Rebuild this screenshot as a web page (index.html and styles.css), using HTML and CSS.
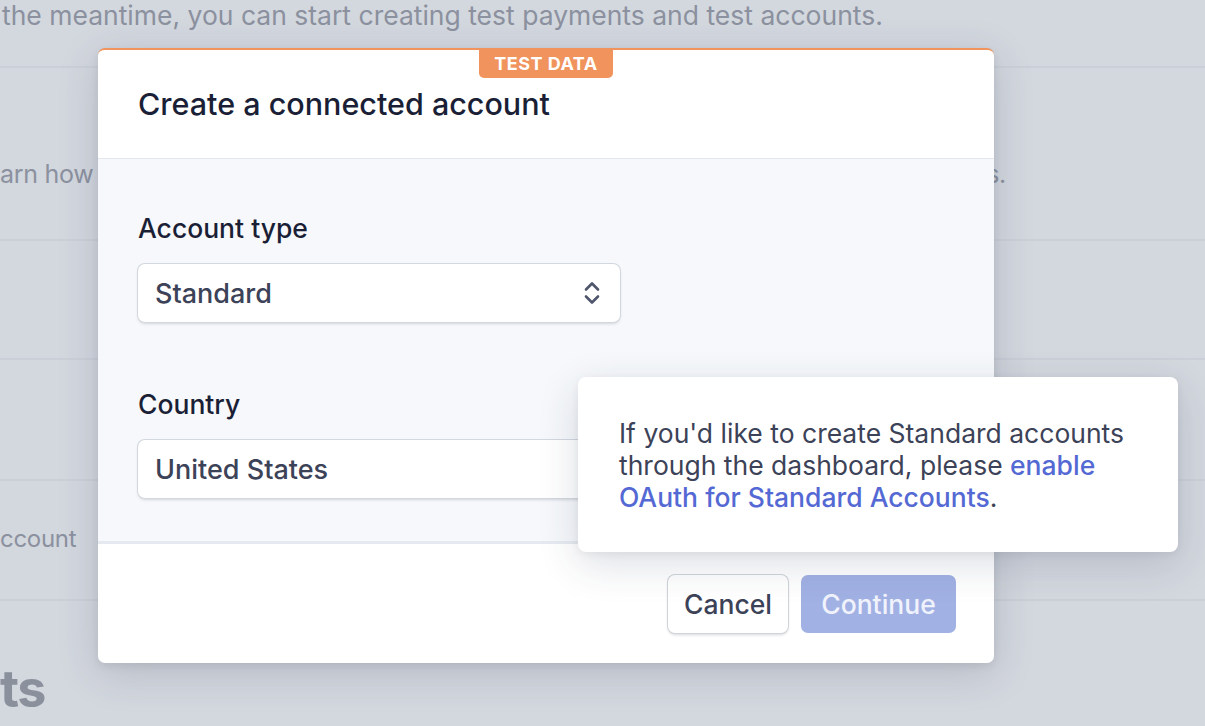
FILE: index.html
```html
<!DOCTYPE html>
<html lang="en">
<head>
<meta charset="utf-8">
<title>Create a connected account</title>
<link rel="stylesheet" href="styles.css">
</head>
<body>
<div class="page">
  <div class="row row-top"><p class="bg-text">the meantime, you can start creating test payments and test accounts.</p></div>
  <div class="row row-learn"><p class="bg-text split"><span>arn how</span><span>s.</span></p></div>
  <div class="row row-empty1"></div>
  <div class="row row-empty2"></div>
  <div class="row row-account"><p class="bg-text">ccount</p></div>
  <div class="row row-heading"><h1 class="bg-heading">ts</h1></div>
</div>

<div class="modal">
  <div class="badge">TEST DATA</div>
  <div class="modal-header"><h2 class="modal-title">Create a connected account</h2></div>
  <div class="modal-body">
    <div class="field">
      <label class="field-label">Account type</label>
      <div class="select">
        <span>Standard</span>
        <svg class="caret" width="16" height="24" viewBox="0 0 16 24"><path d="M2 8.5 L8 2.5 L14 8.5 M2 15.5 L8 21.5 L14 15.5" fill="none" stroke="#4f566b" stroke-width="2.6" stroke-linecap="round" stroke-linejoin="round"/></svg>
      </div>
    </div>
    <div class="field">
      <label class="field-label">Country</label>
      <div class="select"><span>United States</span></div>
    </div>
  </div>
  <div class="modal-footer">
    <button class="btn btn-cancel">Cancel</button>
    <button class="btn btn-continue">Continue</button>
  </div>
</div>

<div class="tooltip">
  <p>If you'd like to create Standard accounts through the dashboard, please <a href="#">enable OAuth for Standard Accounts</a>.</p>
</div>
</body>
</html>
```
FILE: styles.css
```css
html, body {
  margin: 0;
  padding: 0;
  background: #d3d7de;
  font-family: Inter, "Open Sans", sans-serif;
  overflow: hidden;
}
.page {
  width: 1205px;
  height: 726px;
}
.row {
  border-bottom: 2px solid #cbd0d8;
  display: flex;
  align-items: center;
  box-sizing: border-box;
}
.row-top { height: 68px; align-items: flex-start; }
.row-learn { height: 173px; align-items: flex-start; padding-top: 90px; }
.row-empty1 { height: 119px; }
.row-empty2 { height: 121px; }
.row-account { height: 120px; }
.row-heading { border-bottom: none; height: 126px; align-items: flex-start; }
.bg-text {
  margin: 0;
  font-size: 25px;
  line-height: 32px;
  color: #8b919e;
  letter-spacing: -0.3px;
}
.row-top .bg-text { margin-top: -1px; padding-left: 2px; font-size: 26.5px; letter-spacing: 0; }
.split { display: flex; width: 1006px; justify-content: space-between; }
.row-account .bg-text { margin-top: -3px; font-size: 24px; }
.bg-heading {
  margin: 58px 0 0 0;
  font-size: 52px;
  line-height: 60px;
  font-weight: 700;
  color: #8a909c;
  letter-spacing: -1.5px;
}

.modal {
  position: absolute;
  left: 98px;
  top: 48px;
  width: 896px;
  height: 615px;
  background: #fff;
  border-radius: 7px;
  border-top: 2px solid #f0935c;
  box-sizing: border-box;
  display: flex;
  flex-direction: column;
  box-shadow: 0 10px 40px rgba(50, 60, 90, 0.18), 0 3px 8px rgba(0, 0, 0, 0.08);
  overflow: hidden;
}
.badge {
  position: absolute;
  top: 0;
  left: 381px;
  width: 134px;
  height: 28px;
  background: #f0935c;
  color: #fff;
  font-weight: 700;
  font-size: 18px;
  line-height: 28px;
  text-align: center;
  border-radius: 0 0 5px 5px;
  letter-spacing: 0.5px;
}
.modal-header {
  height: 108px;
  border-bottom: 1px solid #e3e8ee;
  padding: 0 40px;
  display: flex;
  align-items: center;
}
.modal-title {
  margin: 0;
  font-size: 30.5px;
  line-height: 36px;
  font-weight: 500;
  color: #1a1f36;
}
.modal-body {
  background: #f6f8fb;
  padding: 54px 40px 0 40px;
  height: 385px;
  box-sizing: border-box;
  border-bottom: 3px solid #e6eaf0;
  display: flex;
  flex-direction: column;
  gap: 67px;
}
.field { display: flex; flex-direction: column; gap: 21px; }
.field-label {
  font-size: 26.5px;
  font-weight: 500;
  line-height: 30px;
  color: #1a1f36;
}
.select {
  width: 482px;
  height: 58px;
  box-sizing: border-box;
  background: #fff;
  border-radius: 7px;
  box-shadow: 0 0 0 1px #d3d7de, 0 2px 3px rgba(60, 66, 87, 0.18);
  display: flex;
  align-items: center;
  justify-content: space-between;
  padding: 0 20px 0 17px;
  font-size: 27px;
  font-weight: 500;
  color: #3c4257;
}
.caret { display: block; }
.modal-footer {
  flex: 1;
  display: flex;
  justify-content: flex-end;
  align-items: flex-start;
  gap: 13px;
  padding: 31px 38px 0 0;
}
.btn {
  height: 58px;
  border: none;
  border-radius: 7px;
  font-family: inherit;
  font-size: 26.5px;
  font-weight: 500;
  padding: 0;
}
.btn-cancel {
  width: 120px;
  background: #fff;
  color: #3c4257;
  box-shadow: 0 0 0 1px #d0d4db, 0 2px 3px rgba(60, 66, 87, 0.2);
}
.btn-continue {
  width: 155px;
  background: #a2b1e4;
  color: #f1f3fc;
}

.tooltip {
  position: absolute;
  left: 578px;
  top: 377px;
  width: 600px;
  height: 175px;
  box-sizing: border-box;
  background: #fff;
  border-radius: 8px;
  padding: 40px 41px;
  box-shadow: 0 12px 40px rgba(40, 50, 80, 0.16), 0 2px 8px rgba(0, 0, 0, 0.06);
}
.tooltip::after {
  content: "";
  position: absolute;
  left: 285px;
  bottom: -10px;
  width: 26px;
  height: 26px;
  background: #fff;
  transform: rotate(45deg);
  border-radius: 3px;
  z-index: -1;
}
.tooltip p {
  margin: 0;
  font-size: 26.5px;
  line-height: 32px;
  color: #3c4257;
  position: relative;
}
.tooltip a {
  color: #5469d4;
  text-decoration: none;
  font-weight: 500;
}
```
